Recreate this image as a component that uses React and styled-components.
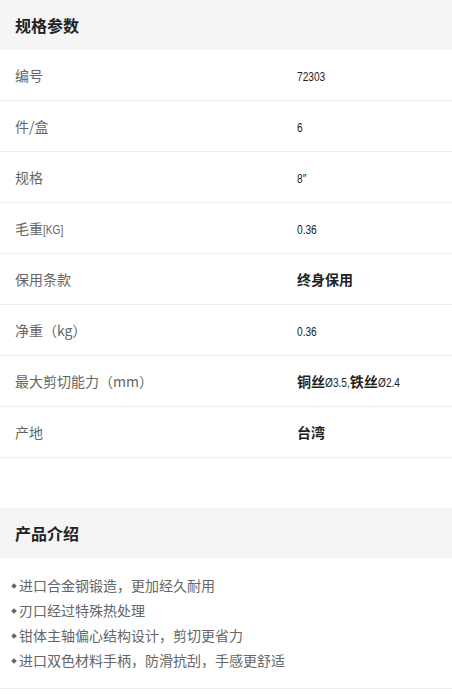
import React from "react";
import styled, { createGlobalStyle } from "styled-components";

const Global = createGlobalStyle`
  html, body { margin: 0; padding: 0; background: #fff; }
  body { font-family: "Noto Sans CJK SC", "Noto Sans", sans-serif; }
`;

const Page = styled.div`
  width: 452px;
  background: #fff;
`;

const SectionHead = styled.div`
  height: 50px;
  background: #f5f5f5;
  display: flex;
  align-items: center;
  padding: 0 15px;
  font-size: 16px;
  font-weight: 700;
  color: #222;
`;

const Table = styled.div`
  display: flex;
  flex-direction: column;
  margin-bottom: 50px;
`;

const Row = styled.div`
  height: 50px;
  border-bottom: 1px solid #ececec;
  display: grid;
  grid-template-columns: 282px 1fr;
  align-items: center;
  padding: 0 15px;
`;

const Label = styled.div`
  font-size: 14px;
  color: #666;
  white-space: nowrap;
`;

const Value = styled.div`
  font-size: 14px;
  color: #222;
  font-weight: 700;
  white-space: nowrap;
`;

const Num = styled.span`
  display: inline-block;
  font-family: "Liberation Sans", Arial, sans-serif;
  font-size: 13.5px;
  font-weight: 400;
  color: ${(p) => (p.$muted ? "#666" : "#222")};
  transform: scaleX(0.75);
  transform-origin: left center;
  margin-right: ${(p) => `calc(-0.25 * ${p.$w}em)`};
`;

const List = styled.ul`
  list-style: none;
  margin: 0;
  padding: 15px 0 15px 11px;
  border-bottom: 1px solid #ececec;
`;

const Item = styled.li`
  height: 25px;
  line-height: 25px;
  font-size: 14px;
  color: #666;
  display: flex;
  align-items: center;
  white-space: nowrap;
  &::before {
    content: "";
    width: 4px;
    height: 4px;
    background: #666;
    transform: rotate(45deg);
    margin: 0 3px 0 1px;
    flex: none;
  }
`;

const widths = { ".": 0.278, ",": 0.278, "\u2033": 0.3, "Ø": 0.778, "[": 0.278, "]": 0.278, K: 0.667, G: 0.778 };
const textWidth = (s) => [...s].reduce((a, c) => a + (widths[c] ?? 0.556), 0);

const specs = [
  [[["c", "编号"]], [["n", "72303"]]],
  [[["c", "件/盒"]], [["n", "6"]]],
  [[["c", "规格"]], [["n", "8\u2033"]]],
  [[["c", "毛重"], ["n", "[KG]"]], [["n", "0.36"]]],
  [[["c", "保用条款"]], [["c", "终身保用"]]],
  [[["c", "净重（kg）"]], [["n", "0.36"]]],
  [[["c", "最大剪切能力（mm）"]], [["c", "铜丝"], ["n", "Ø3.5,"], ["c", "铁丝"], ["n", "Ø2.4"]]],
  [[["c", "产地"]], [["c", "台湾"]]],
];

const renderParts = (parts, muted) =>
  parts.map(([t, s], i) =>
    t === "n" ? (
      <Num key={i} $w={textWidth(s)} $muted={muted}>{s}</Num>
    ) : (
      <span key={i}>{s}</span>
    )
  );

const intro = [
  "进口合金钢锻造，更加经久耐用",
  "刃口经过特殊热处理",
  "钳体主轴偏心结构设计，剪切更省力",
  "进口双色材料手柄，防滑抗刮，手感更舒适",
];

export default function App() {
  return (
    <Page>
      <Global />
      <SectionHead>规格参数</SectionHead>
      <Table>
        {specs.map(([k, v], idx) => (
          <Row key={idx}>
            <Label>{renderParts(k, true)}</Label>
            <Value>{renderParts(v, false)}</Value>
          </Row>
        ))}
      </Table>
      <SectionHead>产品介绍</SectionHead>
      <List>
        {intro.map((t) => (
          <Item key={t}>{t}</Item>
        ))}
      </List>
    </Page>
  );
}
